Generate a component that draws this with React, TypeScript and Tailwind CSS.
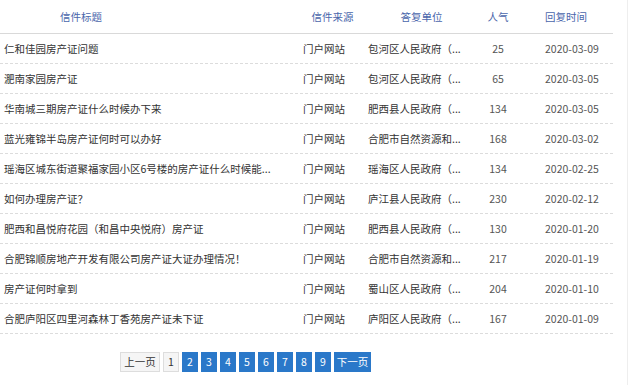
const rows = [
  { title: "仁和佳园房产证问题", unit: "包河区人民政府（...", hot: 25, date: "2020-03-09" },
  { title: "淝南家园房产证", unit: "包河区人民政府（...", hot: 65, date: "2020-03-05" },
  { title: "华南城三期房产证什么时候办下来", unit: "肥西县人民政府（...", hot: 134, date: "2020-03-05" },
  { title: "蓝光雍锦半岛房产证何时可以办好", unit: "合肥市自然资源和...", hot: 168, date: "2020-03-02" },
  { title: "瑶海区城东街道聚福家园小区6号楼的房产证什么时候能...", unit: "瑶海区人民政府（...", hot: 134, date: "2020-02-25" },
  { title: "如何办理房产证？", unit: "庐江县人民政府（...", hot: 230, date: "2020-02-12" },
  { title: "肥西和昌悦府花园（和昌中央悦府）房产证", unit: "肥西县人民政府（...", hot: 130, date: "2020-01-20" },
  { title: "合肥锦顺房地产开发有限公司房产证大证办理情况！", unit: "合肥市自然资源和...", hot: 217, date: "2020-01-19" },
  { title: "房产证何时拿到", unit: "蜀山区人民政府（...", hot: 204, date: "2020-01-10" },
  { title: "合肥庐阳区四里河森林丁香苑房产证未下证", unit: "庐阳区人民政府（...", hot: 167, date: "2020-01-09" },
]

const font = { fontFamily: '"Noto Sans CJK SC", "Noto Sans", sans-serif' }

export default function App() {
  return (
    <div className="w-[633px] h-[385px] bg-white overflow-hidden" style={font}>
      <div className="w-[628px] h-full border-r border-[#eeeeee]">
        <div className="w-[613px]">
          <div className="flex h-[34px] items-center border-b border-[#d9d9d9] text-[10.5px] text-[#4a66ab]">
            <div className="w-[300px] pl-[60px]">信件标题</div>
            <div className="w-[65px] text-center">信件来源</div>
            <div className="w-[113px] text-center">答复单位</div>
            <div className="w-[40px] text-center">人气</div>
            <div className="w-[95px] pl-[27px]">回复时间</div>
          </div>
          {rows.map((r, i) => (
            <div key={i} className="flex h-[30px] items-center border-b border-dashed border-[#dcdcdc] text-[10.5px] text-[#333333]">
              <div className="w-[300px] pl-[4px] whitespace-nowrap overflow-hidden">{r.title}</div>
              <div className="w-[65px] pl-[3px]">门户网站</div>
              <div className="w-[113px] pl-[3px] whitespace-nowrap">{r.unit}</div>
              <div className="w-[40px] text-center text-[#555555]">{r.hot}</div>
              <div className="w-[95px] pl-[27px] text-[#555555]">{r.date}</div>
            </div>
          ))}
        </div>
        <div className="flex mt-[18px] pl-[120px] gap-[3px] text-[10.5px]">
          <div className="w-[40px] h-[20px] flex items-center justify-center bg-[#f5f5f5] border border-[#dddddd] text-[#333333]">上一页</div>
          <div className="w-[16px] h-[20px] flex items-center justify-center bg-[#f5f5f5] border border-[#dddddd] text-[#333333]">1</div>
          {[2, 3, 4, 5, 6, 7, 8, 9].map((n) => (
            <div key={n} className="w-[16px] h-[20px] flex items-center justify-center bg-[#2a78c9] text-white">{n}</div>
          ))}
          <div className="w-[37px] h-[20px] flex items-center justify-center bg-[#2a78c9] text-white">下一页</div>
        </div>
      </div>
    </div>
  )
}
